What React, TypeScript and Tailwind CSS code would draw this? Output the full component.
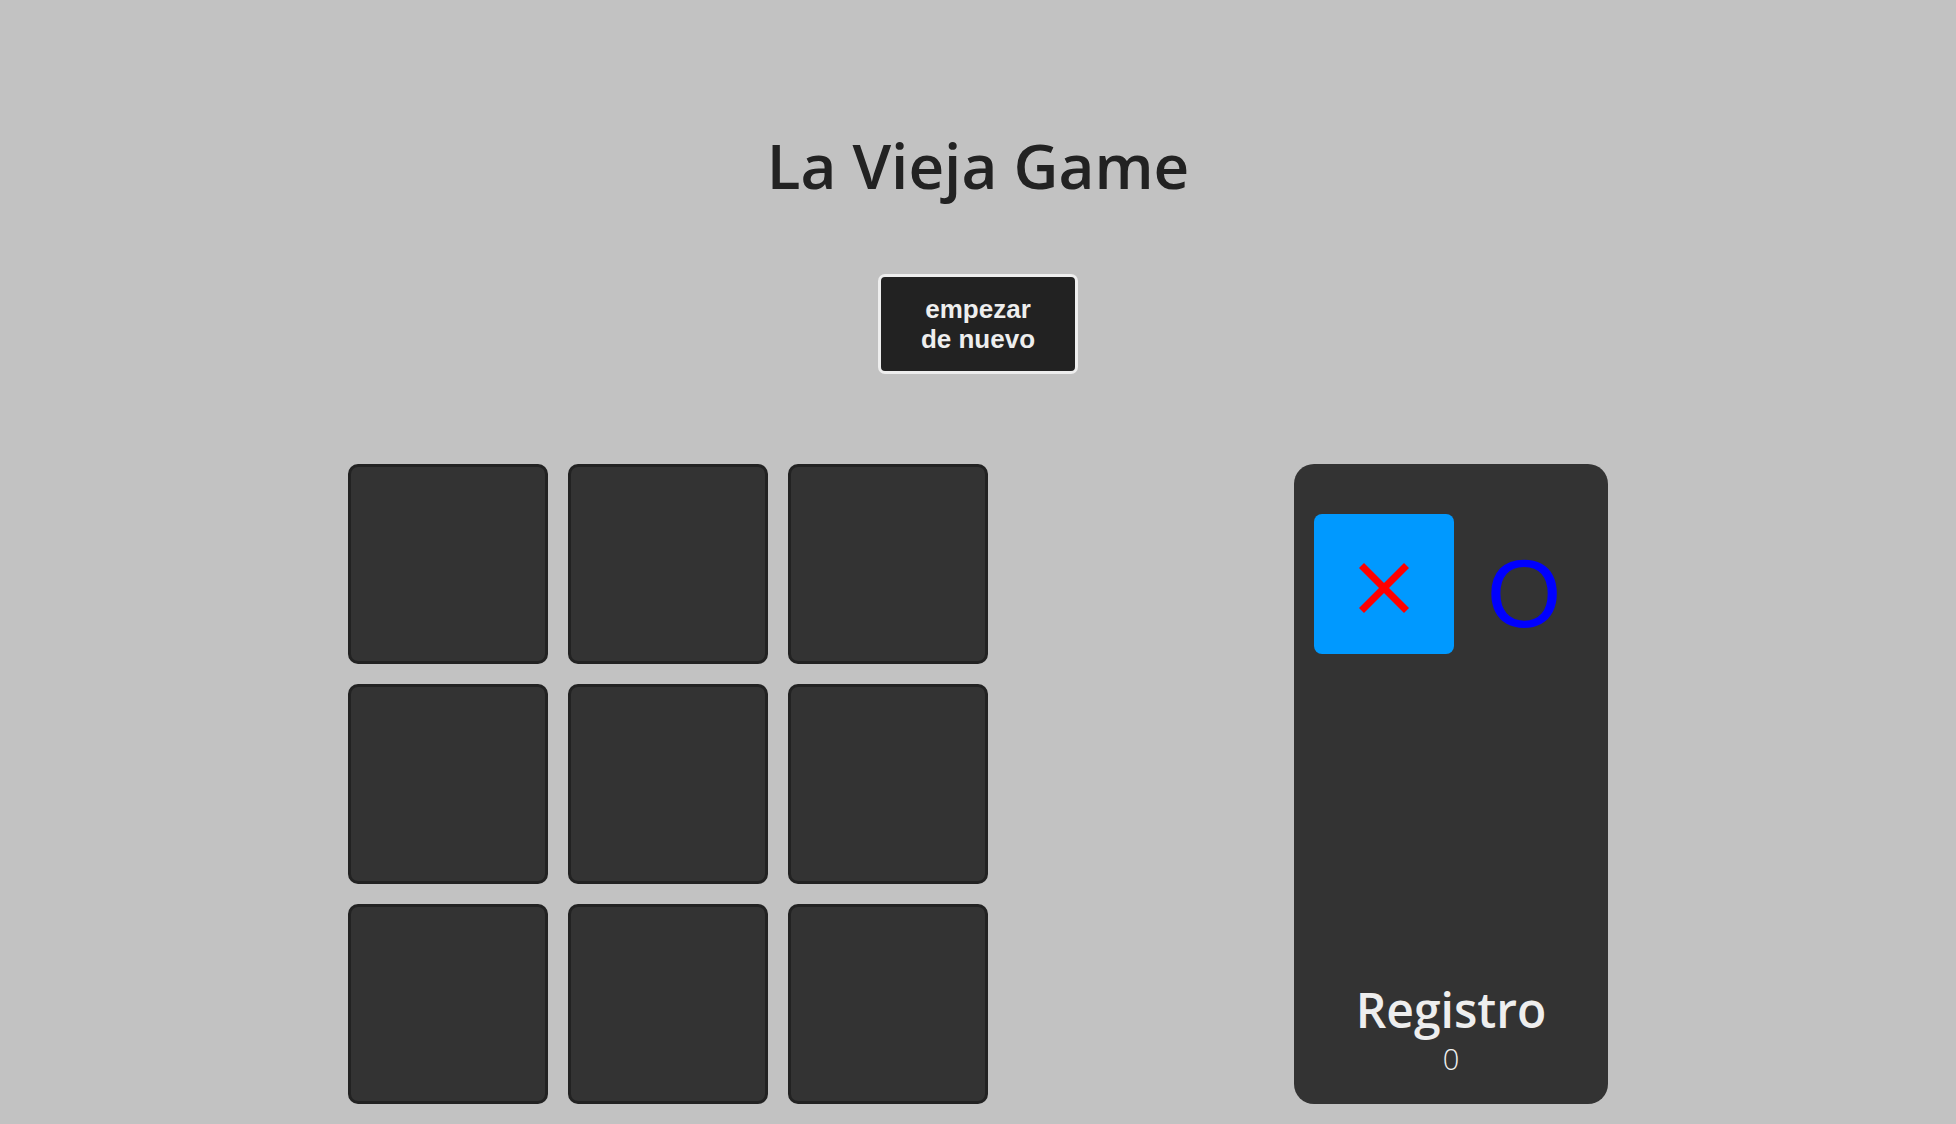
export default function App() {
	const cells = [0, 1, 2, 3, 4, 5, 6, 7, 8];

	return (
		<div className="min-h-screen w-full bg-[#c2c2c2] flex flex-col items-center font-['Open_Sans',sans-serif]">
			<h1 className="mt-[134px] text-[62px] leading-none font-semibold text-[#222]">
				La Vieja Game
			</h1>

			<button className="mt-[78px] w-[200px] h-[100px] rounded-[7px] border-[3px] border-[#eee] bg-[#222] text-[#eee] text-[26px] leading-[30px] font-bold font-['Liberation_Sans',Arial,sans-serif]">
				empezar
				<br />
				de nuevo
			</button>

			<div className="mt-[90px] w-full px-[348px] flex justify-between items-start">
				<div className="grid grid-cols-3 gap-5">
					{cells.map((c) => (
						<div
							key={c}
							className="w-[200px] h-[200px] rounded-[10px] border-[3px] border-[#222] bg-[#333]"
						/>
					))}
				</div>

				<div className="w-[314px] h-[640px] shrink-0 rounded-[20px] bg-[#333] flex flex-col pt-[50px] pl-5">
					<div className="flex">
						<div className="w-[140px] h-[140px] shrink-0 rounded-lg bg-[#0099ff] flex items-center justify-center">
							<svg width="50" height="50" viewBox="0 0 50 50" className="mt-[8px]">
								<line x1="2.5" y1="2.5" x2="47.5" y2="47.5" stroke="#ff0000" strokeWidth="7" />
								<line x1="47.5" y1="2.5" x2="2.5" y2="47.5" stroke="#ff0000" strokeWidth="7" />
							</svg>
						</div>
						<div className="w-[140px] h-[140px] shrink-0 flex justify-center items-start pt-[32px]">
							<span className="text-[96px] leading-none text-[#0000ff] font-['Liberation_Sans',Arial,sans-serif]">
								O
							</span>
						</div>
					</div>

					<div className="mt-auto pb-[31px] pr-5 flex flex-col items-center text-[#eee]">
						<span className="text-[48px] leading-none font-semibold">Registro</span>
						<span className="mt-[10px] text-[29px] leading-none font-light text-[#f0f0f0]">0</span>
					</div>
				</div>
			</div>
		</div>
	);
}
